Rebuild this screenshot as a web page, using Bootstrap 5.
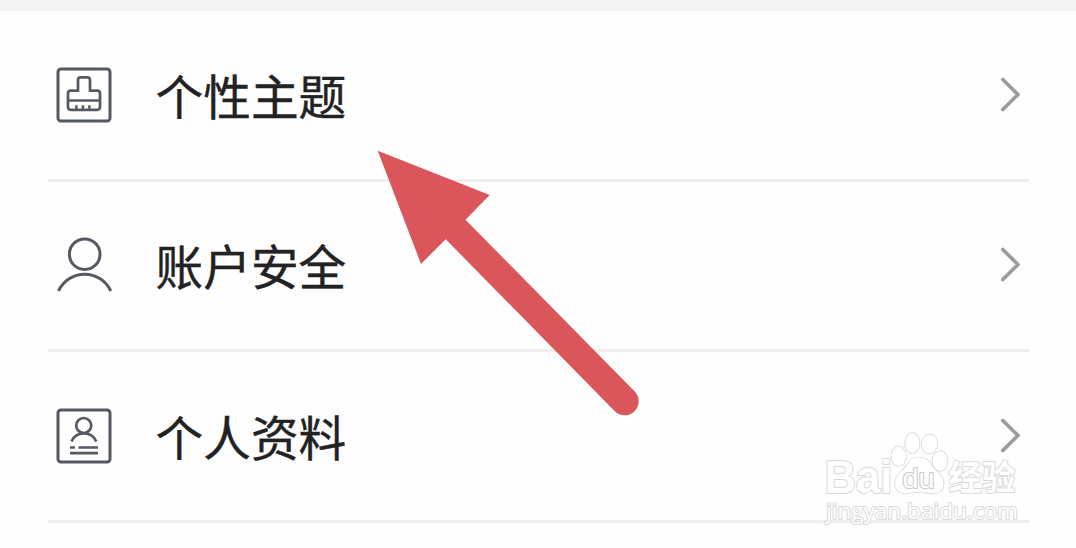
<!DOCTYPE html>
<html lang="zh-CN">

<head>
    <meta charset="UTF-8">
    <meta name="viewport" content="width=device-width, initial-scale=1.0">
    <title>个性主题</title>
    <link rel="stylesheet" href="https://cdn.jsdelivr.net/npm/bootstrap@5.3.3/dist/css/bootstrap.min.css">
    <style>
        body {
            height: 548px;
            font-family: "Noto Sans CJK SC", sans-serif;
            background: #fefefe;
        }

        .top-strip {
            height: 11px;
            background: #f4f4f4;
        }

        .menu-list {
            margin: 0 47px 0 48px;
        }

        .menu-item {
            height: 170.5px;
            padding: 0 6px;
            border-bottom: 3px solid #efefef;
            color: #222;
        }

        .menu-icon {
            width: 60px;
            height: 60px;
            fill: none;
            stroke: #555962;
            stroke-width: 3;
        }

        .menu-label {
            margin-left: 41.5px;
            font-size: 47.7px;
            line-height: 60px;
            -webkit-text-stroke: .4px #222;
        }

        .chevron {
            width: 24px;
            height: 40px;
            fill: none;
            stroke: #9b9b9b;
            stroke-width: 3.7;
            stroke-linecap: round;
            stroke-linejoin: round;
        }

        .pointer-arrow {
            left: 370px;
            top: 144px;
        }

        .watermark {
            left: 820px;
            top: 428px;
            fill: #fff;
            stroke: #d9d9d9;
            stroke-width: 2;
            stroke-linejoin: round;
            paint-order: stroke;
        }
    </style>
    <script src="https://cdn.jsdelivr.net/npm/bootstrap@5.3.3/dist/js/bootstrap.bundle.min.js"></script>
</head>

<body class="position-relative overflow-hidden">
    <div class="top-strip"></div>
    <div class="menu-list">
        <a href="#" class="menu-item d-flex align-items-center text-decoration-none">
            <svg class="menu-icon" viewBox="0 0 60 60">
                <rect x="4" y="4" width="52" height="52" rx="3" />
                <path d="M24 25.7V15q0-2.700 2.700-2.700h6.600q2.700 0 2.700 2.700v10.700h7.300q2.700 0 2.700 2.700v13.700q0 2.700-2.700 2.700H16.700q-2.700 0-2.700-2.700V28.400q0-2.700 2.700-2.700zM14 35.500h32" stroke-width="2.700" />
                <path d="M22.400 40.300v4M28.900 40.300v4M35.400 40.300v4" stroke-width="2.500" />
            </svg>
            <span class="menu-label">个性主题</span>
            <svg class="chevron ms-auto" viewBox="0 0 24 40"><path d="M3.800 4.500 19 19.500 3.800 34.500" /></svg>
        </a>
        <a href="#" class="menu-item d-flex align-items-center text-decoration-none">
            <svg class="menu-icon" viewBox="0 0 60 60">
                <circle cx="30.700" cy="19.200" r="15.300" />
                <path d="M4.500 56a28.700 28.700 0 0 1 52.300 0" />
            </svg>
            <span class="menu-label">账户安全</span>
            <svg class="chevron ms-auto" viewBox="0 0 24 40"><path d="M3.800 4.500 19 19.500 3.800 34.500" /></svg>
        </a>
        <a href="#" class="menu-item d-flex align-items-center text-decoration-none">
            <svg class="menu-icon" viewBox="0 0 60 60">
                <rect x="4" y="4" width="52" height="52" rx="3" />
                <circle cx="29.700" cy="19.500" r="7.500" stroke-width="2.700" />
                <path d="M17.500 35.500a13.500 13.500 0 0 1 24.700 0" stroke-width="2.700" />
                <path d="M16 41.500h5M24.500 41.500H44M16 47.200h28" stroke-width="2.700" />
            </svg>
            <span class="menu-label">个人资料</span>
            <svg class="chevron ms-auto" viewBox="0 0 24 40"><path d="M3.800 4.500 19 19.500 3.800 34.500" /></svg>
        </a>
    </div>

    <svg class="watermark position-absolute" width="210" height="104" viewBox="820 428 210 104">
        <g stroke-width="1.700">
            <ellipse cx="898.700" cy="456.300" rx="7.300" ry="9.700" />
            <ellipse cx="912.300" cy="443" rx="7.100" ry="9.900" />
            <ellipse cx="929.500" cy="444" rx="7.700" ry="9.500" transform="rotate(8 929.500 444)" />
            <ellipse cx="940.200" cy="461" rx="7.400" ry="9.900" />
            <path d="M919 457.500c6 0 10 2.500 12.500 7.500 3 6 12 9.500 12 18 0 8-5 11-11 10.500-5-.5-8-1.500-13.500-1.500s-8 1.500-13 1.500c-6 0-11-3-11-10.500 0-8.500 9-12 12-18 2.500-5 6-7.500 12-7.500z" />
        </g>
        <text x="824.500" y="492.500" font-family="Liberation Sans" font-weight="700" font-size="45.500" textLength="68" lengthAdjust="spacingAndGlyphs">Bai</text>
        <text x="902.500" y="488" font-family="Liberation Sans" font-size="27" textLength="32" lengthAdjust="spacingAndGlyphs" stroke="#c9c9c9">du</text>
        <text x="948.500" y="490" font-family="Noto Sans CJK SC" font-weight="700" font-size="34" textLength="67" lengthAdjust="spacingAndGlyphs">经验</text>
        <text x="826" y="518.500" font-family="Open Sans" font-weight="400" font-size="21.500" textLength="192" lengthAdjust="spacingAndGlyphs">jingyan.baidu.com</text>
    </svg>

    <svg class="pointer-arrow position-absolute" width="280" height="280" viewBox="370 144 280 280">
        <path fill="#db565b" d="M377.700 150.700 489.700 195 465.500 219.700 634.500 391.300A14 14 0 0 1 614.800 411.300L445.700 239.200 421 264z" />
    </svg>
</body>

</html>
